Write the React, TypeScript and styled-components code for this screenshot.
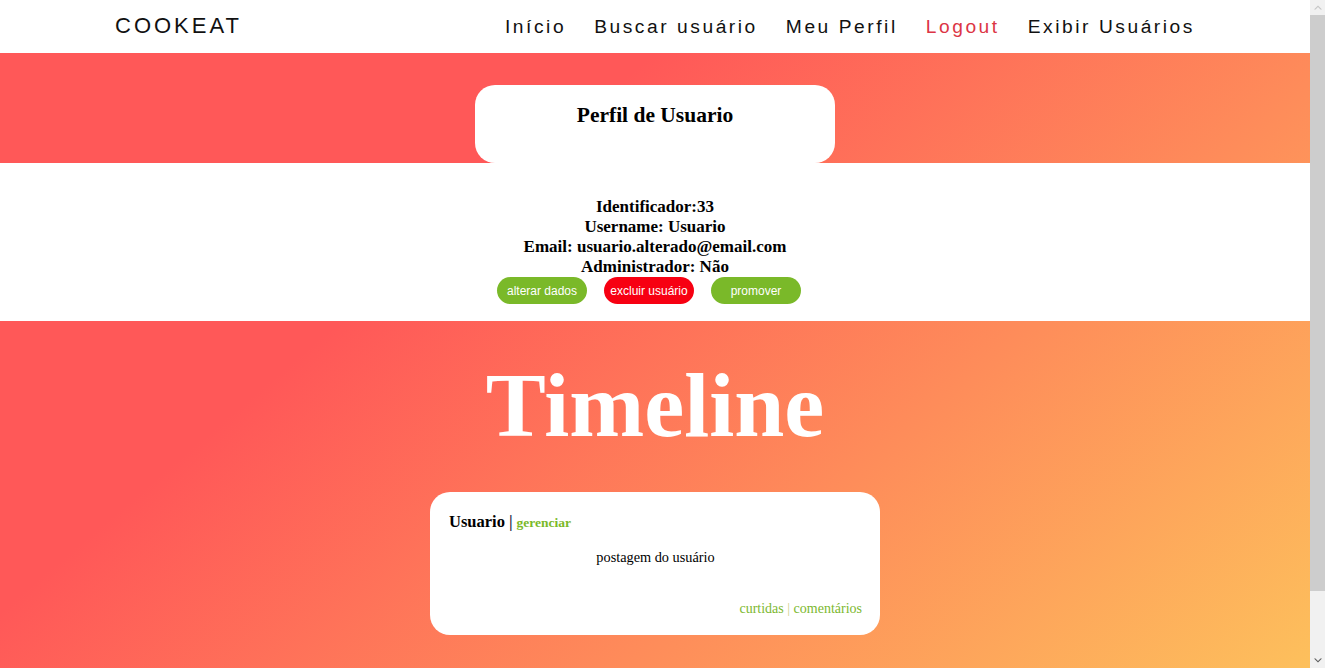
import React from "react";
import styled, { createGlobalStyle, css } from "styled-components";

const GlobalStyle = createGlobalStyle`
  html, body {
    margin: 0;
    padding: 0;
    overflow: hidden;
  }
  body {
    font-family: "Liberation Serif", "Times New Roman", serif;
    background: #ffffff;
  }
`;

const warmGradient = css`
  background-image: linear-gradient(139.5deg, #ff5858 34%, #fdc15c 100%);
  background-attachment: fixed;
`;

const Viewport = styled.div`
  display: flex;
  height: 100vh;
  overflow: hidden;
`;

const Page = styled.div`
  flex: 1;
  min-width: 0;
  display: flex;
  flex-direction: column;
  overflow: hidden;
`;

const ScrollBar = styled.div`
  width: 15px;
  flex: none;
  display: flex;
  flex-direction: column;
  background: #f1f1f1;
`;

const ScrollButton = styled.div`
  height: 15px;
  display: flex;
  align-items: center;
  justify-content: center;
`;

const ScrollThumb = styled.div`
  height: 576px;
  background: #cdcdcd;
`;

const ScrollTrack = styled.div`
  flex: 1;
`;

const NavBar = styled.nav`
  height: 53px;
  flex: none;
  display: flex;
  align-items: center;
  justify-content: space-between;
  padding: 0 115px 0 115px;
  background: #ffffff;
  font-family: "Liberation Sans", Arial, sans-serif;
`;

const Brand = styled.a`
  font-size: 22px;
  letter-spacing: 3px;
  color: #111;
  text-decoration: none;
  margin-top: -1px;
`;

const NavLinks = styled.ul`
  display: flex;
  gap: 28px;
  list-style: none;
  margin: 0;
  padding: 0;
`;

const NavLink = styled.a<{ $danger?: boolean }>`
  font-size: 19.2px;
  letter-spacing: 2.55px;
  color: ${(p) => (p.$danger ? "#dc3545" : "#111")};
  text-decoration: none;
`;

const ProfileBand = styled.header`
  ${warmGradient};
  height: 110px;
  flex: none;
  display: flex;
  justify-content: center;
  align-items: flex-end;
`;

const TitleCard = styled.div`
  width: 360px;
  height: 78px;
  box-sizing: border-box;
  padding-top: 18px;
  background: #ffffff;
  border-radius: 20px;
  text-align: center;
`;

const CardTitle = styled.h2`
  margin: 0;
  font-size: 21.5px;
  font-weight: bold;
  color: #000;
`;

const InfoSection = styled.section`
  background: #ffffff;
  flex: none;
  padding: 34px 0 17px;
  display: flex;
  flex-direction: column;
  align-items: center;
`;

const InfoLine = styled.div`
  font-size: 17px;
  line-height: 20px;
  font-weight: bold;
  color: #000;
`;

const ActionRow = styled.div`
  display: flex;
  gap: 17px;
  padding-right: 12px;
`;

const ActionButton = styled.button<{ $variant: "ok" | "danger" }>`
  width: 90px;
  height: 27px;
  border: none;
  border-radius: 14px;
  background: ${(p) => (p.$variant === "danger" ? "#f70012" : "#7ab929")};
  color: #ffffff;
  font-family: "Liberation Sans", Arial, sans-serif;
  font-size: 12px;
  padding: 0;
  cursor: pointer;
`;

const TimelineSection = styled.main`
  ${warmGradient};
  flex: none;
  display: flex;
  flex-direction: column;
  align-items: center;
  padding: 33px 0 106px;
`;

const TimelineTitle = styled.h1`
  margin: 0 0 35px;
  font-size: 90px;
  font-weight: bold;
  color: #ffffff;
  line-height: normal;
`;

const PostCard = styled.article`
  width: 450px;
  box-sizing: border-box;
  background: #ffffff;
  border-radius: 20px;
  padding: 20px 18px 17px 19px;
  display: flex;
  flex-direction: column;
`;

const PostHeader = styled.div`
  line-height: 20px;
  font-size: 16.5px;
  font-weight: bold;
  color: #000;
`;

const Divider = styled.span`
  color: #1c2a4a;
  margin: 0 4px;
`;

const ManageLink = styled.a`
  color: #7ab929;
  font-size: 13.5px;
  font-weight: bold;
  text-decoration: none;
`;

const PostBody = styled.p`
  margin: 15px 0 0;
  text-align: center;
  font-size: 14.3px;
  line-height: 18px;
  color: #000;
`;

const PostFooter = styled.div`
  margin-top: 34px;
  text-align: right;
  font-size: 14px;
  line-height: 18px;
  color: #7cb82f;
`;

const FooterSep = styled.span`
  color: #cdd08a;
`;

function Chevron({ down, color }: { down?: boolean; color: string }) {
  return (
    <svg width="8" height="5" viewBox="0 0 8 5">
      <path
        d={down ? "M0 0.5 L4 4.5 L8 0.5 L6.5 0.5 L4 3 L1.5 0.5 Z" : "M0 4.5 L4 0.5 L8 4.5 L6.5 4.5 L4 2 L1.5 4.5 Z"}
        fill={color}
      />
    </svg>
  );
}

export default function App() {
  return (
    <Viewport>
      <GlobalStyle />
      <Page>
        <NavBar>
          <Brand href="#">COOKEAT</Brand>
          <NavLinks>
            <li><NavLink href="#">Início</NavLink></li>
            <li><NavLink href="#">Buscar usuário</NavLink></li>
            <li><NavLink href="#">Meu Perfil</NavLink></li>
            <li><NavLink href="#" $danger>Logout</NavLink></li>
            <li><NavLink href="#">Exibir Usuários</NavLink></li>
          </NavLinks>
        </NavBar>
        <ProfileBand>
          <TitleCard>
            <CardTitle>Perfil de Usuario</CardTitle>
          </TitleCard>
        </ProfileBand>
        <InfoSection>
          <InfoLine>Identificador:33</InfoLine>
          <InfoLine>Username: Usuario</InfoLine>
          <InfoLine>Email: usuario.alterado@email.com</InfoLine>
          <InfoLine>Administrador: Não</InfoLine>
          <ActionRow>
            <ActionButton $variant="ok">alterar dados</ActionButton>
            <ActionButton $variant="danger">excluir usuário</ActionButton>
            <ActionButton $variant="ok">promover</ActionButton>
          </ActionRow>
        </InfoSection>
        <TimelineSection>
          <TimelineTitle>Timeline</TimelineTitle>
          <PostCard>
            <PostHeader>
              Usuario<Divider>|</Divider>
              <ManageLink href="#">gerenciar</ManageLink>
            </PostHeader>
            <PostBody>postagem do usuário</PostBody>
            <PostFooter>
              curtidas <FooterSep>|</FooterSep> comentários
            </PostFooter>
          </PostCard>
        </TimelineSection>
      </Page>
      <ScrollBar>
        <ScrollButton>
          <Chevron color="#c4c4c4" />
        </ScrollButton>
        <ScrollThumb />
        <ScrollTrack />
        <ScrollButton>
          <Chevron down color="#595959" />
        </ScrollButton>
      </ScrollBar>
    </Viewport>
  );
}
